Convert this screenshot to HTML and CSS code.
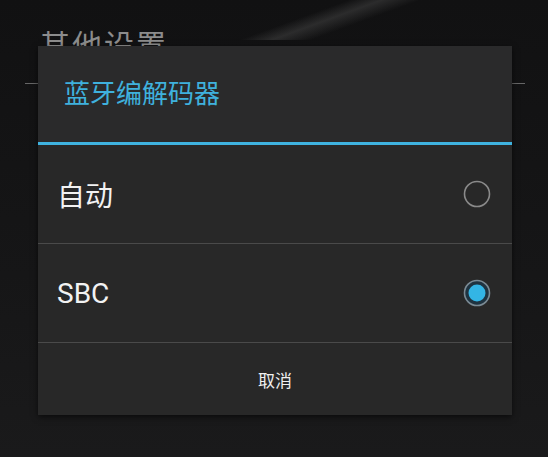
FILE: index.html
```html
<!DOCTYPE html>
<html>
<head>
<meta charset="utf-8">
<link rel="stylesheet" href="styles.css">
</head>
<body>
<div class="screen">
  <div class="bg-header">
    <div class="bg-title">其他设置</div>
    <div class="bg-line"></div>
  </div>
  <div class="dialog">
    <div class="dlg-title">蓝牙编解码器</div>
    <div class="dlg-accent"></div>
    <div class="option">
      <span class="opt-label">自动</span>
      <svg class="radio" width="30" height="30" viewBox="0 0 30 30"><circle cx="15" cy="15" r="12.5" fill="none" stroke="#8a8a8a" stroke-width="1.6"/></svg>
    </div>
    <div class="divider"></div>
    <div class="option">
      <span class="opt-label">SBC</span>
      <svg class="radio" width="30" height="30" viewBox="0 0 30 30"><circle cx="15" cy="15" r="12.5" fill="#1f3340" stroke="#7a8a94" stroke-width="1.6"/><circle cx="15" cy="15" r="8.5" fill="#33b5e5"/></svg>
    </div>
    <div class="divider"></div>
    <div class="button">取消</div>
  </div>
</div>
</body>
</html>
```
FILE: styles.css
```css
html, body {
  margin: 0;
  padding: 0;
}
body {
  width: 548px;
  height: 457px;
  overflow: hidden;
  background: #151516;
  font-family: Roboto, "Noto Sans CJK SC", sans-serif;
}
.screen {
  position: relative;
  width: 548px;
  height: 457px;
  background: linear-gradient(160deg, rgba(20,20,20,0) 0, rgba(20,20,20,0) 53%, rgba(70,70,70,0.5) 58%, rgba(20,20,20,0) 64%) no-repeat 0 0 / 548px 40px, linear-gradient(#111112, #161617 60%, #1a1a1b);
}
.bg-header {
  padding-top: 26px;
}
.bg-title {
  padding-left: 40px;
  font-size: 30px;
  line-height: 40px;
  color: #8c8c8c;
  letter-spacing: 2px;
}
.bg-line {
  margin: 17px 23px 0 25px;
  height: 1px;
  background: #666;
}
.dialog {
  position: absolute;
  left: 38px;
  top: 46px;
  width: 474px;
  height: 369px;
  background: #282828;
  box-shadow: 0 2px 6px rgba(0,0,0,0.6);
  display: flex;
  flex-direction: column;
}
.dlg-title {
  height: 96px;
  box-sizing: border-box;
  padding: 30px 0 0 26px;
  font-size: 26px;
  line-height: 36px;
  color: #3fb1dd;
  background: #2a2a2b;
}
.dlg-accent {
  height: 3px;
  background: #3fb3e0;
}
.option {
  height: 98px;
  display: flex;
  align-items: center;
  justify-content: space-between;
  padding: 0 20px 0 19px;
}
.opt-label {
  font-size: 28px;
  color: #f2f2f2;
}
.divider {
  height: 1px;
  background: #4a4a4a;
}
.button {
  flex: 1;
  display: flex;
  align-items: center;
  justify-content: center;
  font-size: 17px;
  color: #f0f0f0;
}
```
